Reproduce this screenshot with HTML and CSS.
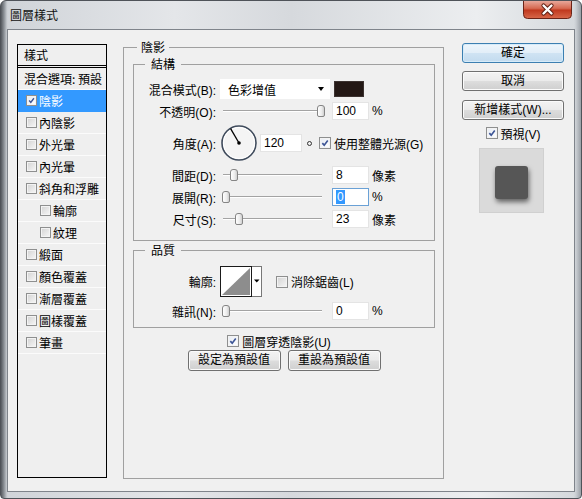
FILE: index.html
```html
<!DOCTYPE html>
<html lang="zh-Hant">
<head>
<meta charset="utf-8">
<title>圖層樣式</title>
<link rel="stylesheet" href="styles.css">
</head>
<body>
<div class="window">
  <div class="titlebar">
    <span class="title">圖層樣式</span>
    <button class="close" aria-label="關閉">
      <svg width="49" height="19" viewBox="0 0 49 19">
        <defs>
          <linearGradient id="cg" x1="0" y1="0" x2="0" y2="1">
            <stop offset="0" stop-color="#eab0a4"/>
            <stop offset="0.45" stop-color="#d66a52"/>
            <stop offset="0.55" stop-color="#c0391f"/>
            <stop offset="1" stop-color="#d8684a"/>
          </linearGradient>
        </defs>
        <path d="M0.5 0 V14.5 Q0.5 18.5 4.5 18.5 H44.5 Q48.5 18.5 48.5 14.5 V0" fill="url(#cg)" stroke="#6b2418"/>
        <path d="M20.5 5.5 L28.5 13.5 M28.5 5.5 L20.5 13.5" stroke="#5c1c10" stroke-width="4.2" stroke-linecap="round"/>
        <path d="M20.5 5.5 L28.5 13.5 M28.5 5.5 L20.5 13.5" stroke="#ffffff" stroke-width="2.4" stroke-linecap="round"/>
      </svg>
    </button>
  </div>
  <div class="client">
    <div class="stylelist">
      <div class="list-head">樣式</div>
      <div class="item plain">混合選項: 預設</div>
      <div class="item selected"><span class="cb small checked"><svg viewBox="0 0 9 9"><path d="M1.5 4.6 L3.6 6.9 L7.6 1.6"/></svg></span>陰影</div>
      <div class="item"><span class="cb small"></span>內陰影</div>
      <div class="item"><span class="cb small"></span>外光暈</div>
      <div class="item"><span class="cb small"></span>內光暈</div>
      <div class="item"><span class="cb small"></span>斜角和浮雕</div>
      <div class="item nested"><span class="cb small"></span>輪廓</div>
      <div class="item nested"><span class="cb small"></span>紋理</div>
      <div class="item"><span class="cb small"></span>緞面</div>
      <div class="item"><span class="cb small"></span>顏色覆蓋</div>
      <div class="item"><span class="cb small"></span>漸層覆蓋</div>
      <div class="item"><span class="cb small"></span>圖樣覆蓋</div>
      <div class="item"><span class="cb small"></span>筆畫</div>
    </div>

    <fieldset class="group main">
      <legend>陰影</legend>
      <fieldset class="group sub structure">
        <legend>結構</legend>
        <div class="row">
          <span class="lbl">混合模式(B):</span>
          <div class="select"><span>色彩增值</span><span class="arrow"></span></div>
          <span class="swatch"></span>
        </div>
        <div class="row">
          <span class="lbl">不透明(O):</span>
          <div class="slider"><span class="track"></span><span class="thumb" style="left:96px"></span></div>
          <span class="num">100</span>
          <span class="unit">%</span>
        </div>
        <div class="row angle">
          <span class="lbl">角度(A):</span>
          <svg class="dial" width="38" height="38" viewBox="0 0 38 38">
            <circle cx="19" cy="19" r="17" fill="#f4f4f4" stroke="#3f4b5c" stroke-width="1.6"/>
            <circle cx="19" cy="19" r="15.6" fill="none" stroke="#ffffff" stroke-width="1"/>
            <line x1="19" y1="19" x2="10.6" y2="4.6" stroke="#000" stroke-width="1.3"/>
            <circle cx="19" cy="19" r="1.8" fill="#000"/>
          </svg>
          <span class="num wide">120</span>
          <span class="deg"></span>
          <span class="cb checked global"><svg viewBox="0 0 9 9"><path d="M1.5 4.6 L3.6 6.9 L7.6 1.6"/></svg></span>
          <span class="cbtext">使用整體光源(G)</span>
        </div>
        <div class="row">
          <span class="lbl">間距(D):</span>
          <div class="slider"><span class="track"></span><span class="thumb" style="left:9px"></span></div>
          <span class="num">8</span>
          <span class="unit">像素</span>
        </div>
        <div class="row">
          <span class="lbl">展開(R):</span>
          <div class="slider"><span class="track"></span><span class="thumb" style="left:1px"></span></div>
          <span class="num focus"><span class="sel">0</span></span>
          <span class="unit">%</span>
        </div>
        <div class="row">
          <span class="lbl">尺寸(S):</span>
          <div class="slider"><span class="track"></span><span class="thumb" style="left:14px"></span></div>
          <span class="num">23</span>
          <span class="unit">像素</span>
        </div>
      </fieldset>

      <fieldset class="group sub quality">
        <legend>品質</legend>
        <div class="row contour-row">
          <span class="lbl">輪廓:</span>
          <svg class="contour" width="42" height="31" viewBox="0 0 42 31">
            <rect x="0.5" y="0.5" width="41" height="30" fill="#fff" stroke="#777"/>
            <rect x="0.5" y="0.5" width="31" height="30" fill="#fff" stroke="#1a1a1a"/>
            <polygon points="2,29 30,2 30,29" fill="#8d8d8d"/>
            <polygon points="34,13.5 39.5,13.5 36.75,16.5" fill="#000"/>
          </svg>
          <span class="cb aa"></span>
          <span class="cbtext">消除鋸齒(L)</span>
        </div>
        <div class="row">
          <span class="lbl">雜訊(N):</span>
          <div class="slider"><span class="track"></span><span class="thumb" style="left:1px"></span></div>
          <span class="num">0</span>
          <span class="unit">%</span>
        </div>
      </fieldset>

      <div class="knock">
        <span class="cb checked"><svg viewBox="0 0 9 9"><path d="M1.5 4.6 L3.6 6.9 L7.6 1.6"/></svg></span>
        <span class="cbtext">圖層穿透陰影(U)</span>
      </div>
      <div class="btn-row">
        <button class="btn">設定為預設值</button>
        <button class="btn">重設為預設值</button>
      </div>
    </fieldset>

    <div class="side">
      <button class="btn default">確定</button>
      <button class="btn">取消</button>
      <button class="btn">新增樣式(W)...</button>
      <div class="preview-check">
        <span class="cb checked"><svg viewBox="0 0 9 9"><path d="M1.5 4.6 L3.6 6.9 L7.6 1.6"/></svg></span>
        <span class="cbtext">預視(V)</span>
      </div>
      <div class="preview"><span class="shape"></span></div>
    </div>
  </div>
</div>
</body>
</html>
```

FILE: styles.css
```css
* { box-sizing: border-box; }
html, body { margin: 0; padding: 0; }
body {
  width: 582px;
  height: 499px;
  overflow: hidden;
  background: #ffffff;
  font-family: "Liberation Sans", "Noto Sans CJK TC", sans-serif;
  font-size: 12px;
  color: #000;
}

.window {
  width: 582px;
  height: 499px;
  border: 1px solid #4f5359;
  border-radius: 6px 6px 4px 4px;
  background:
    linear-gradient(to right, #55595f 0, #8b9096 3px, #c9cdd2 6px, rgba(0,0,0,0) 7px),
    linear-gradient(to left, #9aa0a6 0, #c9cdd2 5px, rgba(0,0,0,0) 7px),
    linear-gradient(to right, #cfd3d8 0, #e4e6e9 30%, #d6d9dd 50%, #eceef0 82%, #d3d7db 100%);
  display: flex;
  flex-direction: column;
  overflow: hidden;
}

.titlebar {
  height: 28px;
  flex: none;
  display: flex;
  justify-content: space-between;
  align-items: flex-start;
  padding-left: 9px;
}
.title {
  line-height: 28px;
  font-family: "Noto Sans CJK TC", sans-serif;
  font-size: 12px;
  color: #111;
}
.close {
  width: 49px;
  height: 19px;
  margin: -1px 9px 0 0;
  padding: 0;
  border: 0;
  background: none;
  display: block;
}
.close svg { display: block; }

.client {
  margin: 0 6px;
  height: 463px;
  flex: none;
  border: 1px solid #7f848b;
  background: #f0f0f0;
  display: flex;
  align-items: flex-start;
  padding: 10px 0 0 9px;
}

/* left style list */
.stylelist {
  margin-top: 4px;
  width: 90px;
  height: 434px;
  flex: none;
  border: 1px solid #000;
  background: #efefef;
  font-family: "Noto Sans CJK TC", sans-serif;
}
.list-head {
  height: 23px;
  line-height: 20px;
  padding-left: 6px;
  border-bottom: 3px double #000;
}
.item {
  height: 22px;
  line-height: 21px;
  border-bottom: 1px solid #fbfbfb;
  display: flex;
  align-items: center;
  padding-left: 8px;
  white-space: nowrap;
}
.item.plain { padding-left: 6px; }
.item.nested { padding-left: 22px; }
.item.selected { background: #3399ff; color: #fff; border-bottom-color: #3399ff; }
.item .cb { margin-right: 2px; }

/* checkboxes */
.cb {
  display: inline-block;
  flex: none;
  width: 12px;
  height: 12px;
  border: 1px solid #8e8f8f;
  background: linear-gradient(135deg, #d2d2d2 0%, #f7f7f7 100%);
  box-shadow: inset 0 0 0 1px #f3f3f3;
  position: relative;
}
.cb.small { width: 11px; height: 11px; }
.cb.checked { background: linear-gradient(135deg, #e6ebf3 0%, #ffffff 100%); }
.cb svg {
  position: absolute;
  left: 1px;
  top: 1px;
  width: calc(100% - 2px);
  height: calc(100% - 2px);
}
.cb svg path { fill: none; stroke: #3d5596; stroke-width: 1.8; }
.cbtext {
  margin-left: 3px;
  white-space: nowrap;
}

/* group boxes */
fieldset {
  margin: 0;
  padding: 0;
  min-width: 0;
  border: 1px solid #a0a0a0;
}
legend {
  line-height: 14px;
  font-family: "Noto Sans CJK TC", sans-serif;
  font-size: 12px;
}
.main {
  margin-left: 16px;
  width: 321px;
  height: 439px;
  flex: none;
  padding: 3px 8px 0 9px;
}
.main > legend { margin-left: 4px; padding: 0 4px; }
.sub > legend { margin-left: 11px; padding: 0 6px; }
.structure { padding: 7px 0 10px; }
.quality { margin-top: 2px; padding: 6px 0 5px; }

.row {
  display: flex;
  align-items: center;
  height: 22px;
  white-space: nowrap;
}
.row.angle { height: 42px; }
.row.contour-row { height: 37px; }
.lbl {
  width: 82px;
  flex: none;
  text-align: right;
}

.select {
  margin-left: 4px;
  width: 110px;
  height: 20px;
  background: #fff;
  display: flex;
  align-items: center;
  justify-content: space-between;
  padding: 0 6px 0 8px;
  font-family: "Noto Sans CJK TC", sans-serif;
}
.arrow {
  width: 0;
  height: 0;
  border-left: 3.5px solid transparent;
  border-right: 3.5px solid transparent;
  border-top: 4px solid #000;
}
.swatch {
  margin-left: 4px;
  width: 30px;
  height: 16px;
  background: #231815;
  border: 1px solid #3b3230;
}

.slider {
  position: relative;
  margin-left: 5px;
  width: 106px;
  height: 14px;
  flex: none;
}
.track {
  position: absolute;
  left: 2px;
  right: 5px;
  top: 6px;
  height: 2px;
  border-top: 1px solid #a3a3a3;
  border-bottom: 1px solid #ffffff;
}
.thumb {
  position: absolute;
  top: 1px;
  width: 8px;
  height: 12px;
  border: 1px solid #858585;
  border-radius: 3px 3px 2px 2px;
  background: linear-gradient(to right, #ffffff 0%, #ececec 60%, #cfcfcf 100%);
}

.num {
  margin-left: 5px;
  width: 37px;
  height: 18px;
  flex: none;
  background: #fff;
  border: 1px solid #e4e4e4;
  padding-left: 3px;
  line-height: 16px;
}
.num.wide { margin-left: 2px; width: 42px; }
.num.focus { border-color: #6aa1d6; }
.sel { background: #3399ff; color: #fff; padding: 0 1px; }
.unit { margin-left: 3px; }

.dial { margin-left: 4px; flex: none; display: block; }
.deg {
  margin-left: 5px;
  width: 5px;
  height: 5px;
  border: 1px solid #333;
  border-radius: 50%;
  flex: none;
}
.cb.global { margin-left: 7px; }

.contour { margin-left: 4px; flex: none; display: block; }
.cb.aa { margin-left: 14px; }

.knock {
  margin-top: 6px;
  height: 14px;
  display: flex;
  align-items: center;
  justify-content: center;
  padding-right: 10px;
}
.btn-row {
  margin-top: 2px;
  display: flex;
  justify-content: center;
  gap: 7px;
}

.btn {
  height: 21px;
  padding: 0;
  border: 1px solid #707070;
  border-radius: 3px;
  background: linear-gradient(to bottom, #f3f3f3 0%, #ebebeb 48%, #dddddd 52%, #cfcfcf 100%);
  box-shadow: inset 0 0 0 1px #fbfbfb;
  font-family: "Liberation Sans", "Noto Sans CJK TC", sans-serif;
  font-size: 12px;
  line-height: 17px;
  color: #000;
  white-space: nowrap;
}
.btn-row .btn { width: 93px; }

.side {
  margin-left: 18px;
  margin-top: 3px;
  width: 102px;
  flex: none;
  display: flex;
  flex-direction: column;
}
.side .btn { width: 102px; height: 20px; }
.side .btn + .btn { margin-top: 8px; }
.side .btn:nth-child(3) { margin-top: 9px; }
.btn.default {
  border-color: #3c7fb1;
  background: linear-gradient(to bottom, #eef6fc 0%, #e2eef8 48%, #cfe3f3 52%, #c2dbef 100%);
  box-shadow: inset 0 0 0 1px #d6ebf9;
}

.preview-check {
  margin-top: 6px;
  height: 14px;
  display: flex;
  align-items: center;
  justify-content: center;
}
.preview {
  margin: 8px 0 0 17px;
  width: 65px;
  height: 65px;
  background: #dadada;
  border: 1px solid #d0d0d0;
  display: flex;
  align-items: center;
  justify-content: center;
}
.shape {
  width: 33px;
  height: 33px;
  margin-top: 3px;
  background: #565656;
  border-radius: 3px;
  box-shadow: 1px 3px 5px rgba(0, 0, 0, 0.55);
}
```
